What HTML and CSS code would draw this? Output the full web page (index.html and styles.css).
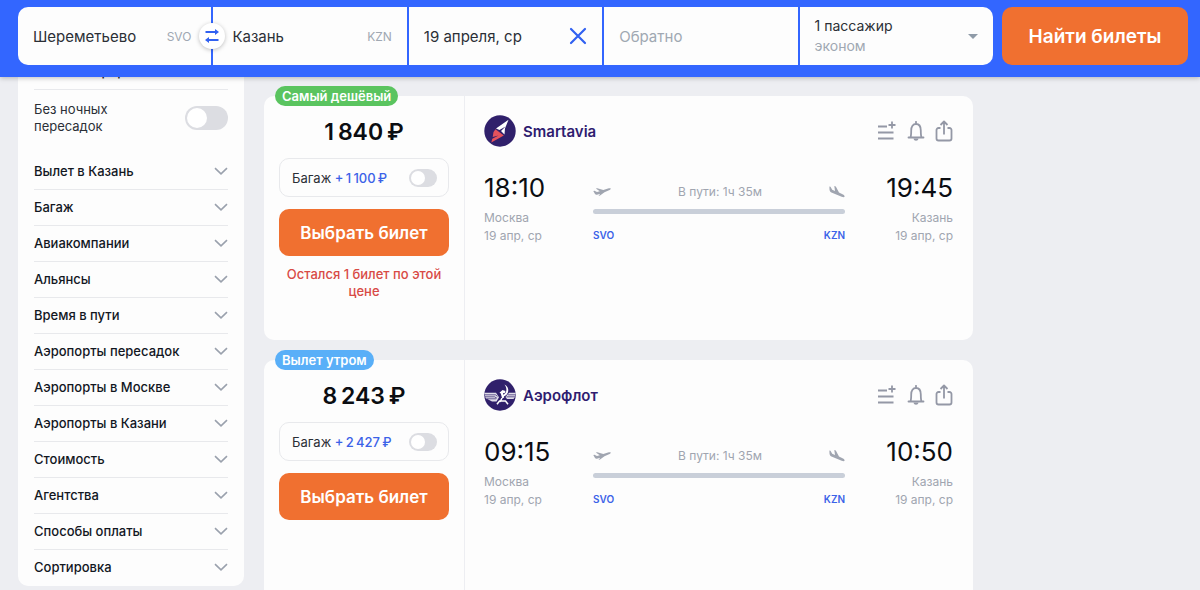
FILE: index.html
```html
<!DOCTYPE html>
<html lang="ru">
<head>
    <meta charset="UTF-8">
    <meta name="viewport" content="width=device-width, initial-scale=1.0">
    <title>Шереметьево — Казань, 19 апреля</title>
    <link rel="stylesheet" href="styles.css">
</head>
<body>
    <svg class="sprite" aria-hidden="true">
        <symbol id="chevron" viewBox="0 0 14 8"><path d="M1 1.2 7 6.800l6-5.600" fill="none" stroke="currentColor" stroke-width="1.6"/></symbol>
        <symbol id="add-list" viewBox="0 0 20 20"><path d="M1 5.500h9M1 11.500h15.500M1 17.500h15.500M15 0.500v7M11.500 4h7" fill="none" stroke="currentColor" stroke-width="1.8"/></symbol>
        <symbol id="bell" viewBox="0 0 18 20"><path d="M1.500 16.500h15M3.500 16.200c.7-1.500.7-3 .7-6.700C4.200 5.500 6 3 9 3s4.800 2.500 4.800 6.500c0 3.700 0 5.200.7 6.700M9 3V0.800" fill="none" stroke="currentColor" stroke-width="1.800" stroke-linecap="round" stroke-linejoin="round"/><path d="M6.500 17.500h5c-.3 1.500-1.200 2.200-2.500 2.200s-2.200-.7-2.500-2.200z" fill="currentColor"/></symbol>
        <symbol id="share" viewBox="0 0 18 22"><path d="M5.500 8H3.500a2 2 0 0 0-2 2v8.500a2 2 0 0 0 2 2h11a2 2 0 0 0 2-2V10a2 2 0 0 0-2-2h-2M9 14.500V1.500M5.500 5 9 1.500 12.500 5" fill="none" stroke="currentColor" stroke-width="1.800" stroke-linejoin="round"/></symbol>
        <symbol id="takeoff" viewBox="0 0 18 10"><path d="M.3 4 1.500 3.700 4 5 6.800 4.200 2.800 1.600 4.300 1.200 10.300 3 15 1.500C16.300 1.100 17.500 1 17.700 1.500 17.900 2.200 17 2.900 16 3.300L11.500 5.200 7 8.600 5.500 9 7.200 6.800 4 7.700C3 7.900 2.500 7.500 2 7z" fill="currentColor"/></symbol>
        <symbol id="landing" viewBox="0 0 16 14"><path d="M.4 1.500 1.500 1.800 3.200 4.800 6 6 5.300 1 6.800 1.500 10 7.500 14 9.400C15.300 10.100 15.900 11 15.500 11.800 15.100 12.400 14 12.200 12.700 11.700L3 7.800C1.300 7 .6 6 .5 4.500z" fill="currentColor"/></symbol>
    </svg>

    <header class="search-header">
        <form class="search-form">
            <div class="search-fields">
                <div class="field">
                    <input type="text" value="Шереметьево" aria-label="Откуда">
                    <span class="airport-code">SVO</span>
                    <button class="swap" type="button" aria-label="Поменять местами">
                        <svg width="14" height="14" viewBox="0 0 14 14"><path d="M0.500 3h11M2.500 11h11" stroke="#3161f1" stroke-width="1.800"/><path d="M10 0 14 3 10 6zM4 8 0 11l4 3z" fill="#3161f1"/></svg>
                    </button>
                </div>
                <div class="field field-to">
                    <input type="text" value="Казань" aria-label="Куда">
                    <span class="airport-code">KZN</span>
                </div>
                <div class="field">
                    <input type="text" value="19 апреля, ср" aria-label="Туда">
                    <button class="clear" type="button" aria-label="Очистить дату">
                        <svg width="18" height="18" viewBox="0 0 18 18"><path d="M2 2l14 14M16 2 2 16" stroke="#3161f1" stroke-width="2.200" stroke-linecap="round"/></svg>
                    </button>
                </div>
                <div class="field">
                    <input type="text" placeholder="Обратно" aria-label="Обратно">
                </div>
                <button class="field passengers" type="button">
                    <span class="passengers-text">
                        <span>1 пассажир</span>
                        <span class="cabin">эконом</span>
                    </span>
                    <svg width="10" height="5" viewBox="0 0 10 5"><path d="M0 0h10L5 5z" fill="#8f9ba8"/></svg>
                </button>
            </div>
            <button class="submit" type="submit">Найти билеты</button>
        </form>
    </header>

    <main class="content">
        <aside class="filters">
            <div class="filter-previous">Ночной перерыв</div>
            <label class="filter-toggle">
                <span>Без ночных пересадок</span>
                <input class="toggle" type="checkbox">
            </label>
            <ul class="filter-list">
                <li><button type="button">Вылет в Казань <svg width="14" height="8"><use href="#chevron"/></svg></button></li>
                <li><button type="button">Багаж <svg width="14" height="8"><use href="#chevron"/></svg></button></li>
                <li><button type="button">Авиакомпании <svg width="14" height="8"><use href="#chevron"/></svg></button></li>
                <li><button type="button">Альянсы <svg width="14" height="8"><use href="#chevron"/></svg></button></li>
                <li><button type="button">Время в пути <svg width="14" height="8"><use href="#chevron"/></svg></button></li>
                <li><button type="button">Аэропорты пересадок <svg width="14" height="8"><use href="#chevron"/></svg></button></li>
                <li><button type="button">Аэропорты в Москве <svg width="14" height="8"><use href="#chevron"/></svg></button></li>
                <li><button type="button">Аэропорты в Казани <svg width="14" height="8"><use href="#chevron"/></svg></button></li>
                <li><button type="button">Стоимость <svg width="14" height="8"><use href="#chevron"/></svg></button></li>
                <li><button type="button">Агентства <svg width="14" height="8"><use href="#chevron"/></svg></button></li>
                <li><button type="button">Способы оплаты <svg width="14" height="8"><use href="#chevron"/></svg></button></li>
                <li><button type="button">Сортировка <svg width="14" height="8"><use href="#chevron"/></svg></button></li>
            </ul>
        </aside>

        <section class="tickets">
            <article class="ticket">
                <span class="badge badge-cheap">Самый дешёвый</span>
                <div class="ticket-price">
                    <div class="price">1&#8201;840&#8201;₽</div>
                    <label class="baggage">
                        <span>Багаж <span class="baggage-price">+&#8201;1&#8201;100&#8201;₽</span></span>
                        <input class="toggle toggle-small" type="checkbox">
                    </label>
                    <button class="select" type="button">Выбрать билет</button>
                    <p class="warning">Остался 1 билет по этой цене</p>
                </div>
                <div class="ticket-info">
                    <div class="ticket-top">
                        <svg class="logo" width="32" height="32" viewBox="0 0 32 32">
                            <circle cx="16" cy="16" r="15.700" fill="#30206b"/>
                            <path d="M24.500 4.800 12 13.500 15.500 15 21.500 11.500 17 16 20.500 19.500 21 13.500z" fill="#fff"/>
                            <path d="M11.500 14.200 19.800 20.500 7.300 27.500 8.300 23.800 14.500 20.500 8.700 22 9.500 17z" fill="#e5525c"/>
                        </svg>
                        <span class="airline">Smartavia</span>
                        <div class="actions">
                            <button type="button" aria-label="Добавить в список"><svg width="20" height="20"><use href="#add-list"/></svg></button>
                            <button type="button" aria-label="Следить за ценой"><svg width="18" height="20"><use href="#bell"/></svg></button>
                            <button type="button" aria-label="Поделиться"><svg width="18" height="22"><use href="#share"/></svg></button>
                        </div>
                    </div>
                    <div class="flight">
                        <div class="point">
                            <div class="time">18:10</div>
                            <div>Москва</div>
                            <div>19 апр, ср</div>
                        </div>
                        <div class="route">
                            <div class="route-top">
                                <svg width="18" height="10"><use href="#takeoff"/></svg>
                                <span>В пути: 1ч 35м</span>
                                <svg width="16" height="14"><use href="#landing"/></svg>
                            </div>
                            <div class="route-line"></div>
                            <div class="route-codes"><span>SVO</span><span>KZN</span></div>
                        </div>
                        <div class="point point-to">
                            <div class="time">19:45</div>
                            <div>Казань</div>
                            <div>19 апр, ср</div>
                        </div>
                    </div>
                </div>
            </article>

            <article class="ticket">
                <span class="badge badge-morning">Вылет утром</span>
                <div class="ticket-price">
                    <div class="price">8&#8201;243&#8201;₽</div>
                    <label class="baggage">
                        <span>Багаж <span class="baggage-price">+&#8201;2&#8201;427&#8201;₽</span></span>
                        <input class="toggle toggle-small" type="checkbox">
                    </label>
                    <button class="select" type="button">Выбрать билет</button>
                </div>
                <div class="ticket-info">
                    <div class="ticket-top">
                        <svg class="logo" width="32" height="32" viewBox="0 0 32 32">
                            <circle cx="16" cy="16" r="15.700" fill="#30206b"/>
                            <path d="M.4 13.800H12l3 4.500-2.500 4.200H8L1.500 19z" fill="#fff" fill-opacity=".85"/>
                            <path d="M31.600 13.800H25L21.500 18l1.500 2h6.500l1.500-2z" fill="#fff" fill-opacity=".85"/>
                            <path d="M.5 15.800h11l2 1.500M1 17.800h9.500l2.500 1.500M3 19.800h9M31.500 15.800H24M31 17.800h-8.500" fill="none" stroke="#30206b" stroke-width=".7"/>
                            <path d="M20.500 5.500c5.500 3 5 10-1.500 12.500l-1-1.500C22.500 15 24 10 20.500 5.500z" fill="#fff"/>
                            <path d="M15.500 13.800 18.500 11l3 1-.8 2.200-1.700-.2 1.200 4.500-2 1-1.400-5z" fill="#fff"/>
                            <path d="M13 25.300l2.500-3.300h6l2.500 3.300M16 23l2-4" fill="none" stroke="#fff" stroke-width="1.500"/>
                        </svg>
                        <span class="airline">Аэрофлот</span>
                        <div class="actions">
                            <button type="button" aria-label="Добавить в список"><svg width="20" height="20"><use href="#add-list"/></svg></button>
                            <button type="button" aria-label="Следить за ценой"><svg width="18" height="20"><use href="#bell"/></svg></button>
                            <button type="button" aria-label="Поделиться"><svg width="18" height="22"><use href="#share"/></svg></button>
                        </div>
                    </div>
                    <div class="flight">
                        <div class="point">
                            <div class="time">09:15</div>
                            <div>Москва</div>
                            <div>19 апр, ср</div>
                        </div>
                        <div class="route">
                            <div class="route-top">
                                <svg width="18" height="10"><use href="#takeoff"/></svg>
                                <span>В пути: 1ч 35м</span>
                                <svg width="16" height="14"><use href="#landing"/></svg>
                            </div>
                            <div class="route-line"></div>
                            <div class="route-codes"><span>SVO</span><span>KZN</span></div>
                        </div>
                        <div class="point point-to">
                            <div class="time">10:50</div>
                            <div>Казань</div>
                            <div>19 апр, ср</div>
                        </div>
                    </div>
                </div>
            </article>
        </section>
    </main>
</body>
</html>
```
FILE: styles.css
```css
* {
    box-sizing: border-box;
}
body {
    margin: 0;
    background-color: #edeef2;
    color: #12171f;
    font-family: Inter, Roboto, "Liberation Sans", sans-serif;
    font-size: 13px;
}
button, input {
    font: inherit;
    color: inherit;
}
button {
    border: 0;
    padding: 0;
    background: none;
    cursor: pointer;
}
svg {
    display: block;
    flex: none;
}
.sprite {
    position: absolute;
    width: 0;
    height: 0;
}

/* search header */
.search-header {
    position: sticky;
    top: 0;
    z-index: 2;
    padding: 7px 12px 12px 18px;
    background-color: #3366ff;
    box-shadow: 0 1px 5px rgba(0, 0, 0, 0.25);
}
.search-form {
    display: flex;
    gap: 9px;
}
.search-fields {
    flex: 1;
    display: grid;
    grid-template-columns: repeat(5, 1fr);
    gap: 2px;
}
.field {
    position: relative;
    display: flex;
    align-items: center;
    min-width: 0;
    height: 58px;
    padding: 0 15px;
    background-color: #fdfdfd;
    color: #2b2f36;
    font-size: 15px;
}
.field:first-child {
    padding-right: 20px;
    border-radius: 10px 0 0 10px;
}
.field:last-child {
    border-radius: 0 10px 10px 0;
}
.field-to {
    padding-left: 19px;
}
.field input {
    flex: 1;
    min-width: 0;
    border: 0;
    padding: 0;
    background: none;
    outline: none;
}
.field input::placeholder {
    color: #a0a8b2;
}
.airport-code {
    color: #a0a8b2;
    font-size: 12px;
}
.swap {
    position: absolute;
    top: 16px;
    right: -14px;
    z-index: 1;
    display: flex;
    align-items: center;
    justify-content: center;
    width: 26px;
    height: 26px;
    border-radius: 50%;
    background-color: #fff;
    box-shadow: 0 1px 4px rgba(0, 0, 0, 0.25);
}
.passengers {
    justify-content: space-between;
    text-align: left;
}
.passengers-text {
    display: flex;
    flex-direction: column;
    line-height: 20px;
    font-size: 14px;
}
.cabin {
    color: #a0a8b2;
}
.submit, .select {
    border-radius: 10px;
    background-color: #f07030;
    color: #fff;
    font-weight: 600;
}
.submit {
    width: 186px;
    font-size: 19px;
}

/* page columns */
.content {
    display: grid;
    grid-template-columns: 226px minmax(0, 709px);
    gap: 20px;
    align-items: start;
    padding: 0 18px;
}

/* filters */
.filters {
    margin-top: -20px;
    padding: 0 16px 1px;
    border-radius: 0 0 10px 10px;
    background-color: #fdfdfd;
}
.filter-previous {
    height: 33px;
    padding-top: 5px;
    border-bottom: 1px solid #e8e9ec;
    line-height: 18px;
    font-weight: 500;
}
.filter-toggle {
    display: flex;
    align-items: center;
    justify-content: space-between;
    padding: 11px 0 19px;
    line-height: 17px;
    color: #2b2f36;
}
.filter-toggle span {
    width: 100px;
}
.toggle {
    appearance: none;
    display: flex;
    flex: none;
    width: 43px;
    height: 24px;
    margin: 0;
    padding: 2px;
    border-radius: 12px;
    background-color: #dcdde2;
}
.toggle::before {
    content: "";
    width: 20px;
    height: 20px;
    border-radius: 50%;
    background-color: #fff;
}
.toggle-small {
    width: 28px;
    height: 18px;
}
.toggle-small::before {
    width: 14px;
    height: 14px;
}
.filter-list {
    margin: 0;
    padding: 0;
    list-style: none;
}
.filter-list li + li {
    border-top: 1px solid #e8e9ec;
}
.filter-list button {
    display: flex;
    align-items: center;
    justify-content: space-between;
    width: 100%;
    height: 35px;
    padding-bottom: 1px;
    font-weight: 500;
}
.filter-list svg {
    color: #9aa1ad;
}

/* tickets */
.tickets {
    display: grid;
    gap: 20px;
    padding-top: 19px;
}
.ticket {
    position: relative;
    display: flex;
    min-height: 244px;
    border-radius: 10px;
    background-color: #fdfdfd;
}
.badge {
    position: absolute;
    top: -10px;
    left: 11px;
    padding: 0 7px;
    border-radius: 10px;
    color: #fff;
    font-weight: 600;
    line-height: 20px;
}
.badge-cheap {
    background-color: #5ac45f;
}
.badge-morning {
    background-color: #59aff8;
}
.ticket-price {
    flex: none;
    width: 201px;
    padding: 20px 15px 0;
    border-right: 1px solid #edeef2;
}
.price {
    height: 42px;
    line-height: 32px;
    font-size: 23px;
    font-weight: 600;
    text-align: center;
    color: #0b0d12;
}
.baggage {
    display: flex;
    align-items: center;
    justify-content: space-between;
    height: 39px;
    padding: 0 11px 0 12px;
    border: 1px solid #e8e9ec;
    border-radius: 10px;
    color: #2b2f36;
}
.baggage-price {
    color: #3b62e8;
    font-weight: 500;
}
.select {
    width: 100%;
    height: 47px;
    margin-top: 12px;
    font-size: 17px;
}
.warning {
    margin: 10px 0 0;
    color: #d84a45;
    font-weight: 500;
    line-height: 17px;
    text-align: center;
}
.ticket-info {
    flex: 1;
    min-width: 0;
    padding: 19px 20px 0 19px;
}
.ticket-top {
    display: flex;
    align-items: center;
    height: 32px;
}
.airline {
    margin-left: 7px;
    color: #2f1c70;
    font-size: 15px;
    font-weight: 600;
}
.actions {
    display: flex;
    align-items: center;
    gap: 10px;
    margin-left: auto;
}
.actions button {
    color: #9498a6;
}
.flight {
    display: grid;
    grid-template-columns: 109px 1fr 108px;
    padding-top: 24px;
}
.point {
    color: #a0a5b0;
    font-size: 12px;
    line-height: 18px;
}
.point-to {
    text-align: right;
}
.time {
    height: 38px;
    color: #0b0d12;
    font-size: 26px;
    line-height: 34px;
}
.route-top {
    display: flex;
    align-items: center;
    justify-content: space-between;
    height: 38px;
    padding-top: 3px;
    color: #a0a5b0;
    font-size: 12px;
}
.route-line {
    height: 5px;
    border-radius: 3px;
    background-color: #c9cfd9;
}
.route-codes {
    display: flex;
    justify-content: space-between;
    padding-top: 12px;
    color: #3b62e8;
    font-size: 10px;
    font-weight: 600;
    line-height: 18px;
}
```
